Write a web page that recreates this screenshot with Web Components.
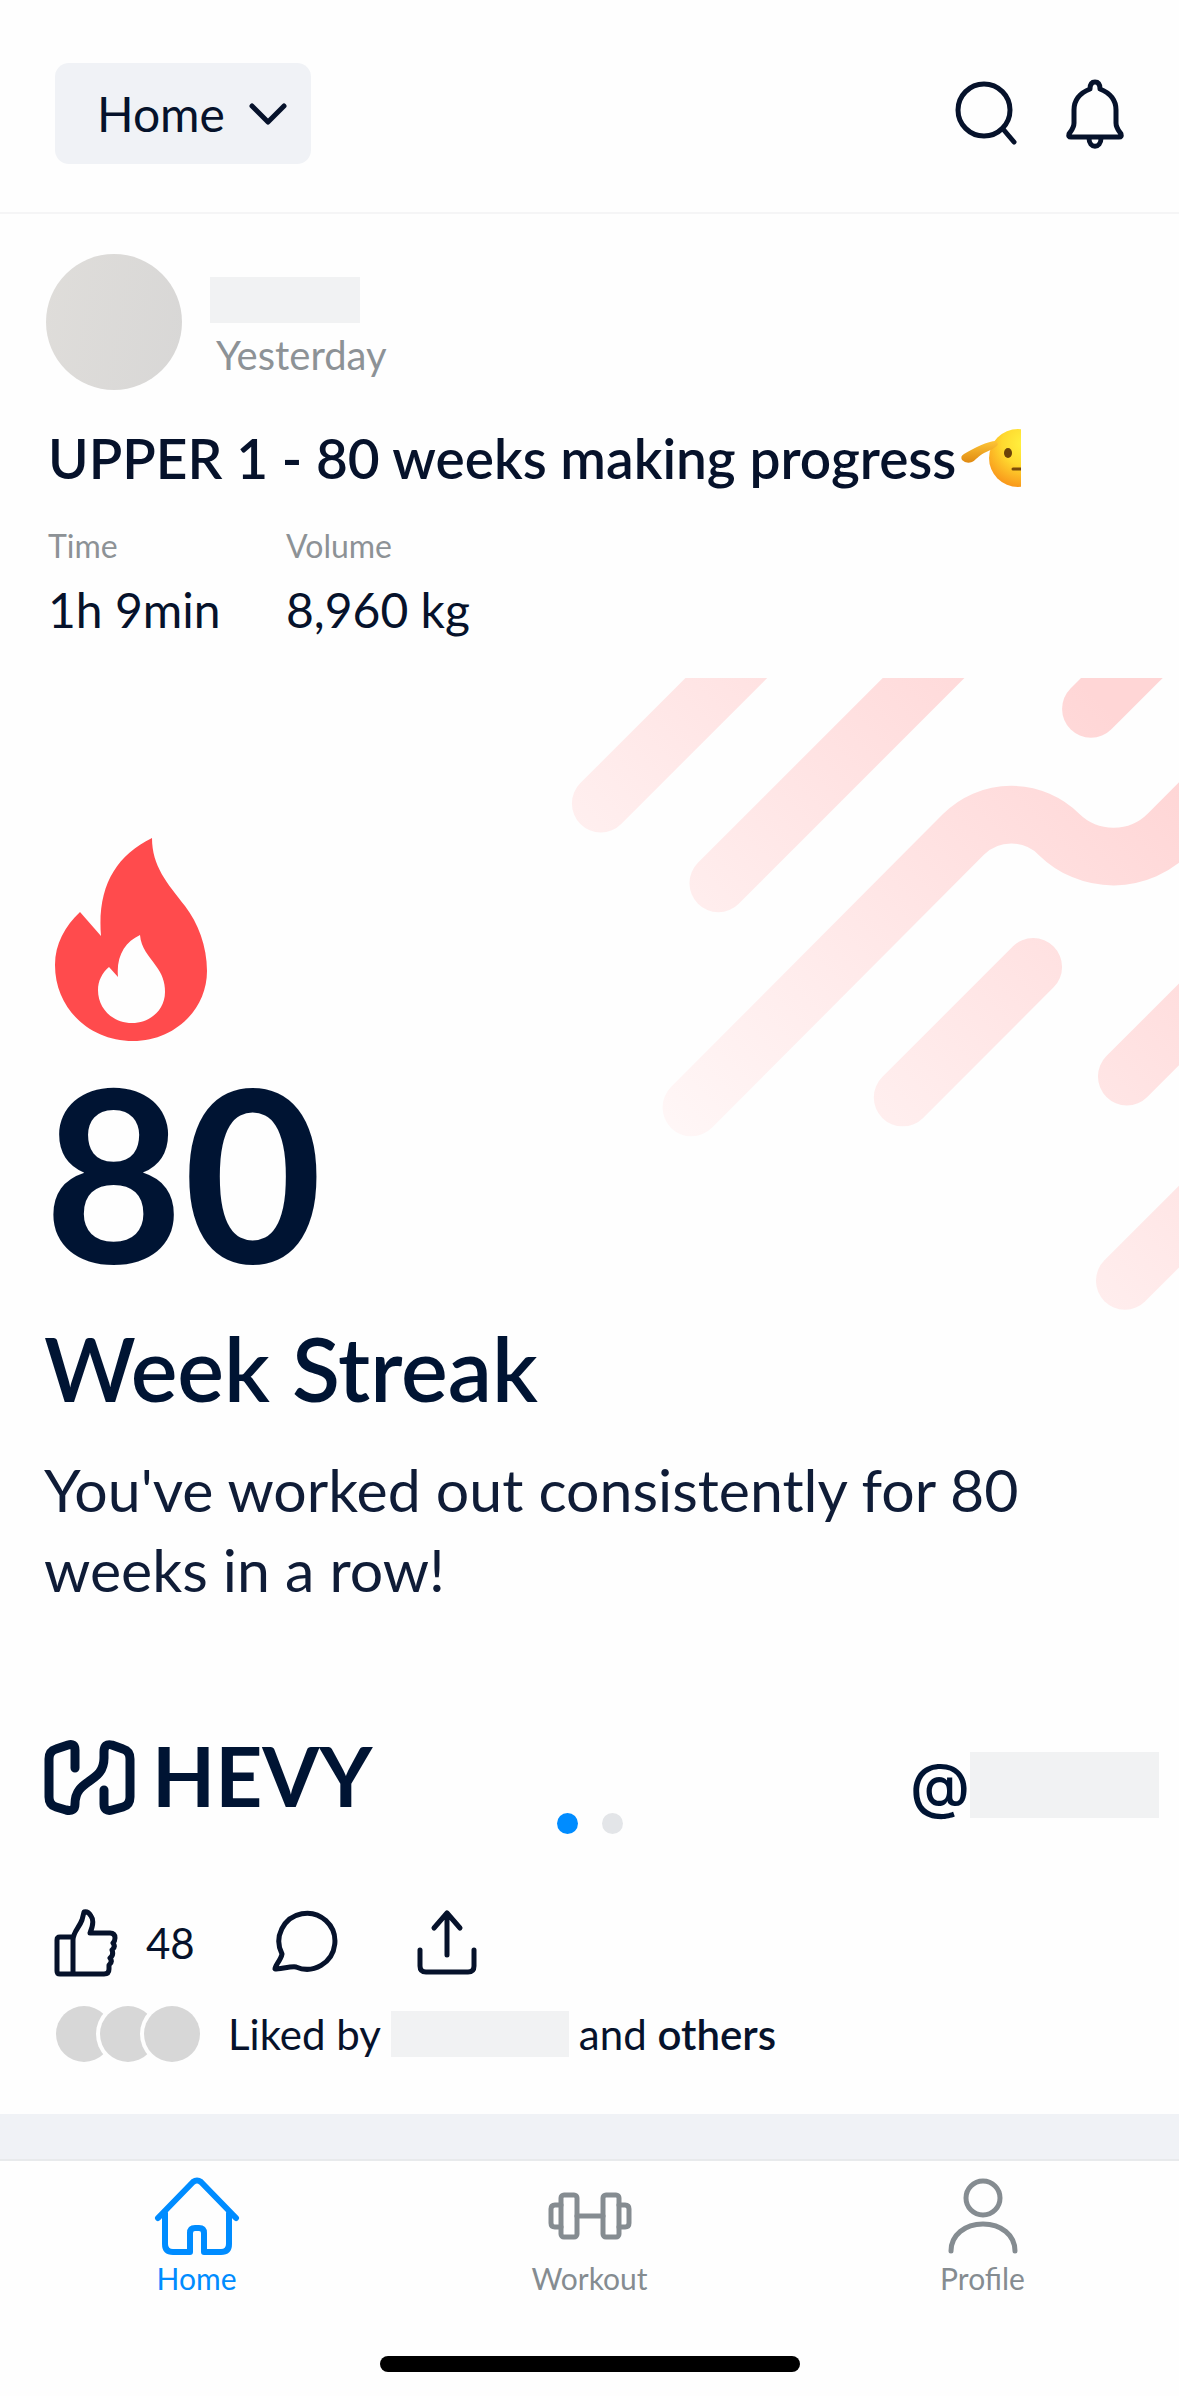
<!DOCTYPE html>
<html lang="en">
<head>
<meta charset="utf-8">
<meta name="viewport" content="width=device-width, initial-scale=1">
<title>Home</title>
<style>
    html { background: #fefefe; }
    body
    {
        margin: 0;
        font-family: Lato, "Liberation Sans", sans-serif;
        color: #06122b;
        --ink: #06122b;
        --navy: #001433;
        --muted: #8d9296;
        --blue: #008cff;
        --soft: #f0f2f6;
        --page: #fefefe;
        --blank: #f1f2f3;
    }
</style>
</head>
<body>
<app-shell>
    <app-header slot="header"></app-header>
    <workout-post time="1h 9min" volume="8,960 kg" when="Yesterday">
        <span slot="title">UPPER 1 - 80 weeks making progress</span>
        <streak-card slot="media" count="80">
            <span slot="heading">Week Streak</span>
            <span slot="text">You've worked out consistently for 80 weeks in a row!</span>
        </streak-card>
        <post-actions slot="actions" likes="48"></post-actions>
    </workout-post>
    <tab-bar slot="footer">
        <tab-item icon="home" active>Home</tab-item>
        <tab-item icon="workout">Workout</tab-item>
        <tab-item icon="profile">Profile</tab-item>
    </tab-bar>
</app-shell>

<script>
// All icons are stroked with currentColor, [viewBox width, height, stroke, markup]
const ICONS =
{
    chevron: [38, 24, 5, '<path d="M3 4 19 20 35 4"/>'],
    search:  [64, 68, 5, '<circle cx="31" cy="30" r="26"/><path d="M50 49 61 62"/>'],
    bell:    [60, 72, 5, '<path d="M25 11C15 15 9 22 9 32V45C9 50 6 53 4 56Q3 59 6 59H54Q57 59 56 56C54 53 51 50 51 45V32C51 22 45 15 35 11Q35 4 30 4 25 4 25 11Z"/><path d="M24 60C24 71 36 71 36 60"/>'],
    like:    [66, 70, 5, '<path d="M21 29H8Q5 29 5 32V63Q5 66 8 66H52Q57 66 57 61V57Q61 54 58 50 62 47 60 42 64 39 61 35 63 33 63 30 63 25 58 25H38C41 18 42 12 39 8Q36 3 32 4L30 12C27 20 21 24 21 32V66"/>'],
    comment: [70, 66, 5, '<path d="M12 44A28 28 0 1 1 26 57C22 56 10 59 5 59 4 57 11 50 12 44Z"/>'],
    share:   [64, 68, 5, '<path d="M32 46V4M19 19 32 4 45 19M5 41V57Q5 63 11 63H53Q59 63 59 57V41"/>'],
    home:    [88, 80, 6, '<path d="M5 42 40 6Q44 3 48 6L83 42M12 37V68Q12 76 20 76H37V57Q37 52 42 52H46Q51 52 51 57V76H68Q76 76 76 68V37"/>'],
    workout: [88, 80, 5, '<rect x="15" y="19" width="16" height="42" rx="3"/><rect x="57" y="19" width="16" height="42" rx="3"/><path d="M15 29H9Q5 29 5 33V47Q5 51 9 51H15M73 29H79Q83 29 83 33V47Q83 51 79 51H73M31 40H57"/>'],
    profile: [88, 80, 5, '<circle cx="44" cy="22" r="17"/><path d="M12 75C12 59 26 48 44 48S76 59 76 75"/>'],
    hevy:    [92, 76, 9, '<path d="M31 28V10Q31 3 24 5L12 9Q5 11 5 19V57Q5 65 12 67L22 70Q31 72 31 64C31 38 60 44 60 18V12Q60 3 68 5L79 9Q86 11 86 19V57Q86 65 79 67L68 70Q60 72 60 64V50"/>']
};

function icon(name)
{
    const [w, h, stroke, body] = ICONS[name];
    return `<svg width="${w}" height="${h}" viewBox="0 0 ${w} ${h}" fill="none" stroke="currentColor"
                 stroke-width="${stroke}" stroke-linecap="round" stroke-linejoin="round" aria-hidden="true">${body}</svg>`;
}

// Shared by every component: renders css() and template() into the shadow root
class BaseElement extends HTMLElement
{
    connectedCallback()
    {
        if (this.shadowRoot)
            return;
        const template = document.createElement('template');
        template.innerHTML = `
            <style>
                * { box-sizing: border-box; }
                svg { display: block; flex: none; }
                button
                {
                    display: flex;
                    align-items: center;
                    padding: 0;
                    border: 0;
                    background: none;
                    font: inherit;
                    color: inherit;
                    cursor: pointer;
                }
                ${this.css()}
            </style>${this.template()}`;
        this.attachShadow({ mode: 'open' });
        this.shadowRoot.appendChild(document.importNode(template.content, true));
    }
}

class AppShell extends BaseElement
{
    css()
    {
        return `
        :host { display: flex; flex-direction: column; min-height: 100vh; background: var(--page); }
        main { flex: 1; background: var(--soft); padding-bottom: 44px; }
        `;
    }
    template()
    {
        return `<slot name="header"></slot><main><slot></slot></main><slot name="footer"></slot>`;
    }
}

class AppHeader extends BaseElement
{
    css()
    {
        return `
        :host { display: block; border-bottom: 2px solid #f5f5f6; }
        header
        {
            display: flex;
            align-items: center;
            justify-content: space-between;
            padding: 63px 54px 48px 55px;
        }
        .picker { display: grid; align-items: center; }
        .picker > * { grid-area: 1 / 1; }
        select
        {
            appearance: none;
            height: 101px;
            padding: 0 86px 0 42px;
            border: 0;
            border-radius: 14px;
            background: var(--soft);
            color: var(--ink);
            font: 48px Lato, "Liberation Sans", sans-serif;
        }
        .picker svg { justify-self: end; margin-right: 24px; pointer-events: none; }
        nav { display: flex; align-items: center; gap: 48px; }
        `;
    }
    template()
    {
        return `
        <header>
            <div class="picker">
                <select aria-label="Feed"><option>Home</option></select>
                ${icon('chevron')}
            </div>
            <nav>
                <button aria-label="Search">${icon('search')}</button>
                <button aria-label="Notifications">${icon('bell')}</button>
            </nav>
        </header>`;
    }
}

// Placeholder for a hidden name
class BlankName extends BaseElement
{
    css()
    {
        return `
        :host { display: block; flex: none; width: 150px; height: 46px; background: var(--blank); }
        :host([size="like"]) { width: 178px; }
        :host([size="handle"]) { width: 189px; height: 66px; }
        `;
    }
    template() { return ''; }
}

class WorkoutPost extends BaseElement
{
    css()
    {
        return `
        :host { display: block; background: var(--page); }
        .author { display: flex; align-items: center; gap: 28px; padding: 40px 46px 0; }
        .avatar { width: 136px; height: 136px; border-radius: 50%; background: linear-gradient(100deg, #dfddda, #d8d7d6); }
        .name { display: flex; flex-direction: column; gap: 8px; padding-top: 12px; }
        .when { padding-left: 6px; font-size: 40px; line-height: 48px; color: var(--muted); }
        h2
        {
            display: flex;
            align-items: center;
            gap: 4px;
            margin: 36px 48px 0;
            font-size: 55px;
            line-height: 64px;
            font-weight: 600;
        }
        dl { display: grid; grid-template-columns: 238px auto; margin: 36px 48px 40px; }
        dt { font-size: 32px; line-height: 40px; color: var(--muted); }
        dd { margin: 16px 0 0; font-size: 48px; line-height: 56px; }
        `;
    }
    template()
    {
        return `
        <article>
            <div class="author">
                <div class="avatar"></div>
                <div class="name">
                    <blank-name></blank-name>
                    <div class="when">${this.getAttribute('when')}</div>
                </div>
            </div>
            <h2><slot name="title"></slot><salute-emoji></salute-emoji></h2>
            <dl>
                <div><dt>Time</dt><dd>${this.getAttribute('time')}</dd></div>
                <div><dt>Volume</dt><dd>${this.getAttribute('volume')}</dd></div>
            </dl>
            <slot name="media"></slot>
            <slot name="actions"></slot>
        </article>`;
    }
}

// Saluting face, cut off by the end of the title
class SaluteEmoji extends BaseElement
{
    css() { return `:host { display: block; flex: none; }`; }
    template()
    {
        return `
        <svg width="61" height="60" viewBox="0 0 61 60" role="img" aria-label="Saluting face">
            <defs>
                <radialGradient id="face" cx="60%" cy="25%" r="75%">
                    <stop offset="0" stop-color="#fff23f"/>
                    <stop offset=".5" stop-color="#ffd92f"/>
                    <stop offset="1" stop-color="#f99a1c"/>
                </radialGradient>
                <linearGradient id="hand" x1="0" y1="0" x2="0" y2="1">
                    <stop offset="0" stop-color="#fdc536"/>
                    <stop offset="1" stop-color="#e08a12"/>
                </linearGradient>
            </defs>
            <circle cx="58" cy="30" r="29" fill="url(#face)"/>
            <ellipse cx="48" cy="25" rx="4" ry="5" fill="#6b4209"/>
            <path d="M53 41H61" stroke="#7a4a0a" stroke-width="3" stroke-linecap="round"/>
            <path d="M36 13C28 13 14 20 4 26Q0 28 2 32 6 36 12 34C16 32 18 28 24 25 30 22 36 20 38 16Z" fill="url(#hand)"/>
        </svg>`;
    }
}

class StreakCard extends BaseElement
{
    css()
    {
        return `
        :host { display: grid; position: relative; color: var(--navy); }
        .art, .content { grid-area: 1 / 1; }
        .art { justify-self: end; width: 54%; height: auto; }
        .content { padding: 160px 20px 40px 44px; }
        .flame { margin-left: 11px; }
        .count { margin: 29px 0 0; font-size: 240px; line-height: 200px; font-weight: 700; }
        h3 { margin: 48px 0 32px; font-size: 88px; line-height: 100px; font-weight: 600; }
        p { margin: 0; max-width: 1020px; font-size: 59px; line-height: 80px; color: #0f1c37; }
        footer { display: flex; justify-content: space-between; height: 78px; margin-top: 130px; }
        .brand { display: flex; align-items: flex-start; align-self: flex-start; gap: 16px; font-size: 82px; line-height: 70px; font-weight: 700; }
        .handle { display: flex; align-items: center; align-self: flex-end; font: 500 61px/60px Inter, "Liberation Sans", sans-serif; }
        .dots { position: absolute; bottom: 24px; left: 0; right: 0; display: flex; justify-content: center; gap: 24px; }
        .dots i { width: 21px; height: 21px; border-radius: 50%; background: #e3e5e8; }
        .dots i:first-child { background: var(--blue); }
        `;
    }
    template()
    {
        return `
        <svg class="art" viewBox="540 678 639 650" fill="none" stroke="url(#fade)" stroke-width="58" stroke-linecap="round" aria-hidden="true">
            <defs>
                <linearGradient id="fade" gradientUnits="userSpaceOnUse" x1="660" y1="1140" x2="1100" y2="700">
                    <stop offset="0" stop-color="#fff7f7"/>
                    <stop offset=".35" stop-color="#ffecec"/>
                    <stop offset=".7" stop-color="#ffe0e0"/>
                    <stop offset="1" stop-color="#ffd6d6"/>
                </linearGradient>
            </defs>
            <path d="M599 804 779 624"/>
            <path d="M717 884 977 624"/>
            <path d="M1091 709 1191 609"/>
            <path d="M690 1109 963 835A68 68 0 0 1 1059 835 78 78 0 0 0 1169 834L1229 774"/>
            <path d="M902 1099 1033 968"/>
            <path d="M1127 1078 1227 978"/>
            <path d="M1125 1283 1225 1183"/>
        </svg>
        <div class="content">
            <svg class="flame" width="152" height="203" viewBox="0 0 152 203" aria-hidden="true">
                <path fill="#ff4b4d" d="M97 0C97 28 112 45 130 68 143 85 152 108 152 133 152 172 119 203 78 203 34 203 0 170 0 127 0 106 10 88 25 74L46 98C42 50 60 18 97 0Z"/>
                <path fill="#fefefe" d="M85 97C86 110 94 118 101 128 107 136 110 144 110 154 110 172 95 185 77 185 58 185 43 171 43 152 43 143 47 135 54 129L63 139C61 118 70 104 85 97Z"/>
            </svg>
            <div class="count">${this.getAttribute('count')}</div>
            <h3><slot name="heading"></slot></h3>
            <p><slot name="text"></slot></p>
            <footer>
                <div class="brand">${icon('hevy')}<span>HEVY</span></div>
                <div class="handle"><span>@</span><blank-name size="handle"></blank-name></div>
            </footer>
        </div>
        <div class="dots"><i></i><i></i></div>`;
    }
}

class PostActions extends BaseElement
{
    css()
    {
        return `
        :host { display: block; padding: 50px 52px 52px; }
        .row { display: flex; align-items: center; gap: 75px; }
        .like { gap: 28px; font-size: 42px; }
        .likes { display: flex; align-items: center; margin-top: 28px; padding-left: 4px; font-size: 42px; line-height: 56px; }
        .faces { display: flex; margin-right: 28px; }
        .faces i { width: 56px; height: 56px; border-radius: 50%; background: #d7d7d7; box-shadow: 0 0 0 4px var(--page); }
        .faces i + i { margin-left: -12px; }
        .by { display: flex; align-items: center; gap: 10px; }
        b { font-weight: 600; }
        `;
    }
    template()
    {
        return `
        <div class="row">
            <button class="like" aria-label="Like">${icon('like')}<span>${this.getAttribute('likes')}</span></button>
            <button aria-label="Comment">${icon('comment')}</button>
            <button aria-label="Share">${icon('share')}</button>
        </div>
        <div class="likes">
            <div class="faces"><i></i><i></i><i></i></div>
            <div class="by"><span>Liked by</span><blank-name size="like"></blank-name><span>and <b>others</b></span></div>
        </div>`;
    }
}

class TabBar extends BaseElement
{
    css()
    {
        return `
        :host { display: block; border-top: 2px solid #e8eaec; background: var(--page); padding-bottom: 24px; }
        nav { display: grid; grid-template-columns: repeat(3, 1fr); padding-top: 15px; }
        .indicator { width: 420px; height: 16px; margin: 60px auto 0; border-radius: 8px; background: #000; }
        `;
    }
    template()
    {
        return `<nav><slot></slot></nav><div class="indicator"></div>`;
    }
}

class TabItem extends BaseElement
{
    css()
    {
        return `
        :host { display: block; color: #858c91; }
        :host([active]) { color: var(--blue); }
        a
        {
            display: flex;
            flex-direction: column;
            align-items: center;
            gap: 4px;
            color: inherit;
            text-decoration: none;
            font-size: 30px;
            line-height: 36px;
        }
        `;
    }
    template()
    {
        return `<a href="#${this.getAttribute('icon')}">${icon(this.getAttribute('icon'))}<slot></slot></a>`;
    }
}

customElements.define("app-shell", AppShell);
customElements.define("app-header", AppHeader);
customElements.define("blank-name", BlankName);
customElements.define("salute-emoji", SaluteEmoji);
customElements.define("workout-post", WorkoutPost);
customElements.define("streak-card", StreakCard);
customElements.define("post-actions", PostActions);
customElements.define("tab-bar", TabBar);
customElements.define("tab-item", TabItem);
</script>
</body>
</html>
